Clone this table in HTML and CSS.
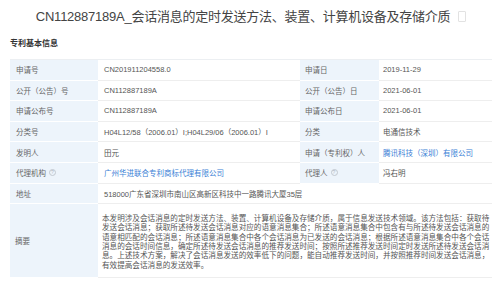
FILE: index.html
```html
<!DOCTYPE html>
<html lang="zh">
<head>
<meta charset="utf-8">
<link rel="stylesheet" href="styles.css">
</head>
<body>
<h1 class="title">CN112887189A_会话消息的定时发送方法、装置、计算机设备及存储介质<span class="copy-icon"></span></h1>
<h2 class="section">专利基本信息</h2>
<div class="grid">
  <div class="lbl">申请号</div><div class="val">CN201911204558.0</div>
  <div class="lbl">申请日</div><div class="val">2019-11-29</div>

  <div class="lbl">公开（公告）号</div><div class="val">CN112887189A</div>
  <div class="lbl">公开（公告）日</div><div class="val">2021-06-01</div>

  <div class="lbl">申请公布号</div><div class="val">CN112887189A</div>
  <div class="lbl">申请公布日</div><div class="val">2021-06-01</div>

  <div class="lbl">分类号</div><div class="val">H04L12/58（2006.01）I;H04L29/06（2006.01）I</div>
  <div class="lbl">分类</div><div class="val">电通信技术</div>

  <div class="lbl">发明人</div><div class="val">田元</div>
  <div class="lbl">申请（专利权）人</div><div class="val link">腾讯科技（深圳）有限公司</div>

  <div class="lbl">代理机构<span class="help">?</span></div><div class="val link">广州华进联合专利商标代理有限公司</div>
  <div class="lbl">代理人<span class="help">?</span></div><div class="val">冯右明</div>

  <div class="lbl">地址</div><div class="val wide">518000广东省深圳市南山区高新区科技中一路腾讯大厦35层</div>

  <div class="lbl">摘要</div>
  <div class="val wide abstract">本发明涉及会话消息的定时发送方法、装置、计算机设备及存储介质，属于信息发送技术领域。该方法包括：获取待<br>发送会话消息；获取所述待发送会话消息对应的语意消息集合；所述语意消息集合中包含有与所述待发送会话消息的<br>语意相匹配的会话消息；所述语意消息集合中各个会话消息为已发送的会话消息；根据所述语意消息集合中各个会话<br>消息的会话时间信息，确定所述待发送会话消息的推荐发送时间；按照所述推荐发送时间定时发送所述待发送会话消<br>息。上述技术方案，解决了会话消息发送的效率低下的问题，能自动推荐发送时间，并按照推荐时间发送会话消息，<br>有效提高会话消息的发送效率。</div>
</div>
</body>
</html>
```
FILE: styles.css
```css
* { box-sizing: border-box; }
html, body { margin: 0; padding: 0; }
body {
  background: #fff;
  font-family: "Liberation Sans", "Noto Sans CJK SC", sans-serif;
  color: #444;
  padding: 0 8px 0 10px;
}
.title {
  margin: 0;
  padding-top: 8px;
  height: 29px;
  font-size: 13px;
  line-height: 18px;
  letter-spacing: -0.25px;
  font-weight: normal;
  color: #444;
  text-align: center;
  white-space: nowrap;
}
.copy-icon {
  display: inline-block;
  width: 8px;
  height: 11px;
  margin-left: 8px;
  border: 1px solid #e2e2e2;
  border-radius: 1px;
  vertical-align: -1px;
}
.section {
  margin: 0;
  height: 31px;
  padding-top: 10px;
  font-size: 8px;
  line-height: 10px;
  font-weight: bold;
  color: #333;
  border-bottom: 1px solid #eceff2;
}
.grid {
  display: grid;
  grid-template-columns: 88px 202px 79px 113px;
  grid-template-rows: repeat(7, 20.6px) 74px;
  font-size: 7.5px;
  border-right: 1px solid #eef0f2;
}
.lbl {
  background: #edf4fb;
  color: #666;
  padding-left: 6px;
  display: flex;
  align-items: center;
  border-bottom: 1px solid #fff;
  white-space: nowrap;
}
.grid .lbl:nth-child(4n+3) { padding-left: 5px; }
.val {
  background: #fff;
  color: #555;
  padding-left: 6px;
  display: flex;
  align-items: center;
  border-bottom: 1px solid #eeeeee;
  white-space: nowrap;
}
.grid .val:nth-child(4n+4) { padding-left: 4px; }
.link { color: #3b7fd6; }
.wide { grid-column: span 3; }
.abstract {
  display: block;
  padding: 10px 3px 0 3px;
  line-height: 9.3px;
  font-size: 7.6px;
  color: #555;
}
.help {
  display: inline-flex;
  align-items: center;
  justify-content: center;
  width: 7px;
  height: 7px;
  margin-left: 3px;
  border: 0.8px solid #c2c8d0;
  border-radius: 50%;
  color: #b0b8c2;
  font-size: 5px;
  line-height: 1;
}
```
